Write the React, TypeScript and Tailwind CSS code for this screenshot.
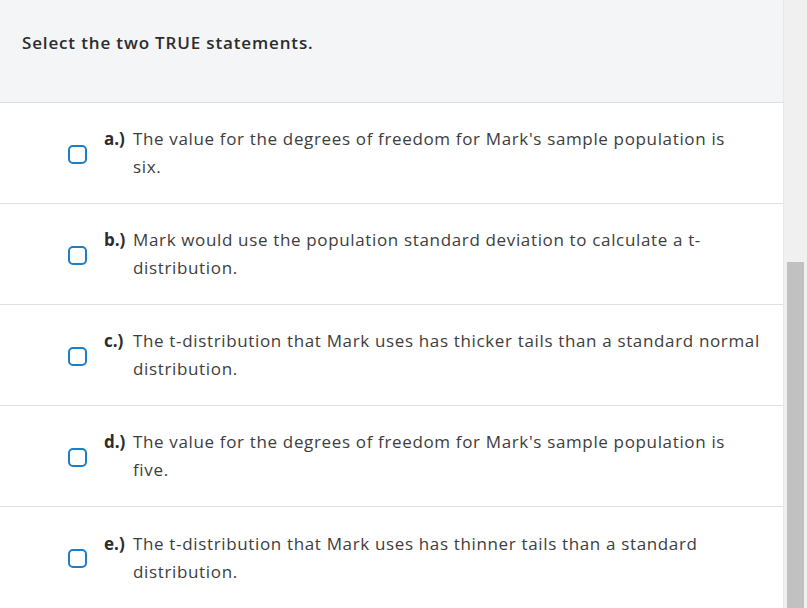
const options = [
  {
    letter: "a.)",
    lines: ["The value for the degrees of freedom for Mark's sample population is", "six."],
  },
  {
    letter: "b.)",
    lines: ["Mark would use the population standard deviation to calculate a t-", "distribution."],
  },
  {
    letter: "c.)",
    lines: ["The t-distribution that Mark uses has thicker tails than a standard normal", "distribution."],
  },
  {
    letter: "d.)",
    lines: ["The value for the degrees of freedom for Mark's sample population is", "five."],
  },
  {
    letter: "e.)",
    lines: ["The t-distribution that Mark uses has thinner tails than a standard", "distribution."],
  },
];

export default function App() {
  return (
    <div
      className="flex h-[608px] w-[807px] overflow-hidden bg-white"
      style={{ fontFamily: '"Open Sans", "Liberation Sans", sans-serif' }}
    >
      <div className="flex w-[783px] flex-col">
        <div className="h-[103px] border-b border-[#dcdde1] bg-[#f4f5f7] pl-[22px] pt-[30px]">
          <h2 className="text-[17px] font-semibold tracking-[0.85px] text-[#2c2c2c]">
            Select the two TRUE statements.
          </h2>
        </div>
        {options.map((opt) => (
          <div
            key={opt.letter}
            className="flex h-[101px] items-center border-b border-[#e0e0e0] pl-[68px] last:border-b-0"
          >
            <div className="mr-[17px] mt-[2px] h-[19px] w-[19px] shrink-0 rounded-[5px] border-[2.5px] border-[#1a7fc8]" />
            <div className="flex text-[17px] leading-[28px] tracking-[0.65px] text-[#3d3d3d]">
              <span className="w-[29px] shrink-0 font-bold tracking-normal text-[#2c2c2c]">{opt.letter}</span>
              <span className="whitespace-nowrap">
                {opt.lines[0]}
                <br />
                {opt.lines[1]}
              </span>
            </div>
          </div>
        ))}
      </div>
      <div className="flex w-[24px] justify-center border-l border-[#e8e8e8] bg-[#f0f0f0] pt-[262px]">
        <div className="h-full w-[17px] bg-[#c1c1c1]" />
      </div>
    </div>
  );
}
